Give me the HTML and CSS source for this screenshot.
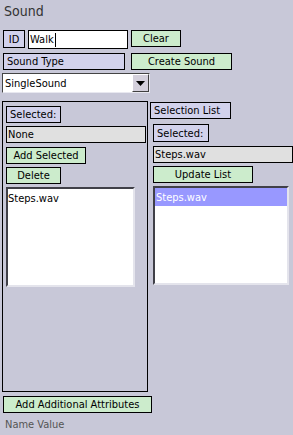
FILE: index.html
```html
<!DOCTYPE html>
<html>
<head>
<meta charset="utf-8">
<link rel="stylesheet" href="styles.css">
</head>
<body>
<div class="page">
  <div class="title">Sound</div>
  <div class="row r1">
    <span class="lbl id">ID</span>
    <span class="input">Walk<span class="caret"></span></span>
    <span class="btn clear">Clear</span>
  </div>
  <div class="row r2">
    <span class="lbl stype">Sound Type</span>
    <span class="btn create">Create Sound</span>
  </div>
  <div class="select">
    <span class="sel-text">SingleSound</span>
    <span class="arrow"><svg width="9" height="5" viewBox="0 0 9 5"><path d="M0 0H9L4.5 5Z" fill="#000"/></svg></span>
  </div>
  <div class="main">
    <div class="panel">
      <span class="lbl sel1">Selected:</span>
      <div class="field none">None</div>
      <span class="btn add">Add Selected</span>
      <span class="btn del">Delete</span>
      <div class="list left-list"><div class="item">Steps.wav</div></div>
    </div>
    <div class="rcol">
      <span class="lbl sl">Selection List</span>
      <span class="lbl sel2">Selected:</span>
      <div class="field steps">Steps.wav</div>
      <span class="btn upd">Update List</span>
      <div class="list right-list"><div class="item hi">Steps.wav</div></div>
    </div>
  </div>
  <span class="btn attrs">Add Additional Attributes</span>
  <div class="nv">Name Value</div>
</div>
</body>
</html>
```
FILE: styles.css
```css
html, body {
  margin: 0;
  padding: 0;
  background: #c8c8d8;
}
.page {
  width: 293px;
  height: 435px;
  font-family: "DejaVu Sans Condensed", "Liberation Sans", sans-serif;
  font-size: 11px;
  color: #000;
  box-sizing: border-box;
  overflow: hidden;
}
.title {
  font-size: 14px;
  color: #333;
  padding: 3px 0 0 4px;
  height: 27px;
  box-sizing: border-box;
}
.row {
  display: flex;
  align-items: flex-start;
}
.lbl, .btn {
  box-sizing: border-box;
  border: 1px solid #000;
  display: flex;
  align-items: center;
  line-height: 1;
}
.lbl { background: #d2d2ec; }
.btn { background: #cceccc; justify-content: center; }
.r1 { margin-top: 3px; height: 23px; }
.id { margin-left: 3px; width: 22px; height: 18px; justify-content: center; }
.input {
  margin-left: 3px;
  width: 100px;
  height: 19px;
  box-sizing: border-box;
  border: 1px solid #000;
  background: #fff;
  display: flex;
  align-items: center;
  padding-left: 1px;
  color: #000;
}
.caret { display: inline-block; width: 1px; height: 14px; background: #000; margin-left: 1px; }
.clear { margin-left: 3px; width: 50px; height: 17px; }
.r2 { height: 20px; }
.stype { margin-left: 3px; width: 122px; height: 17px; padding-left: 3px; }
.create { margin-left: 6px; width: 101px; height: 17px; }
.select {
  margin-left: 2px;
  width: 148px;
  height: 20px;
  box-sizing: border-box;
  border-top: 1px solid #444;
  border-left: 1px solid #444;
  border-right: 1px solid #e8e8f0;
  border-bottom: 1px solid #e8e8f0;
  background: #fff;
  display: flex;
  align-items: stretch;
}
.sel-text { flex: 1; display: flex; align-items: center; padding-left: 2px; }
.arrow {
  width: 17px;
  box-sizing: border-box;
  background: #d4d0dc;
  border-top: 1px solid #fff;
  border-left: 1px solid #fff;
  border-right: 1px solid #404040;
  border-bottom: 1px solid #404040;
  display: flex;
  align-items: center;
  justify-content: center;
}
.main {
  display: flex;
  margin-top: 8px;
  height: 291px;
}
.panel {
  margin-left: 2px;
  width: 146px;
  height: 291px;
  box-sizing: border-box;
  border: 1px solid #000;
  display: flex;
  flex-direction: column;
  align-items: flex-start;
  padding: 4px 0 0 3px;
}
.sel1 { width: 55px; height: 17px; padding-left: 3px; }
.field {
  box-sizing: border-box;
  border: 1px solid #000;
  background: #e0e0e0;
  height: 17px;
  display: flex;
  align-items: center;
  line-height: 1;
  padding-left: 1px;
}
.none { margin-top: 3px; width: 140px; }
.add { margin-top: 4px; width: 80px; height: 17px; }
.del { margin-top: 3px; width: 55px; height: 17px; }
.list {
  box-sizing: border-box;
  background: #fff;
  border-top: 2px solid #404048;
  border-left: 2px solid #404048;
  border-right: 2px solid #e4e4ec;
  border-bottom: 2px solid #e4e4ec;
}
.left-list { margin-top: 3px; width: 129px; height: 100px; }
.item { height: 18px; display: flex; align-items: center; line-height: 1; }
.rcol {
  margin-left: 2px;
  display: flex;
  flex-direction: column;
  align-items: flex-start;
  padding-top: 1px;
}
.sl { width: 81px; height: 17px; padding-left: 3px; }
.sel2 { margin-top: 5px; margin-left: 3px; width: 56px; height: 18px; padding-left: 3px; }
.steps { margin-top: 4px; margin-left: 3px; width: 140px; }
.upd { margin-top: 3px; margin-left: 3px; width: 100px; height: 17px; }
.right-list { margin-top: 3px; margin-left: 3px; width: 136px; height: 99px; }
.hi { background: #9898ff; color: #fff; padding-left: 1px; }
.attrs { margin-left: 3px; margin-top: 4px; width: 149px; height: 17px; }
.nv { margin-left: 5px; margin-top: 5px; color: #555; }
```
